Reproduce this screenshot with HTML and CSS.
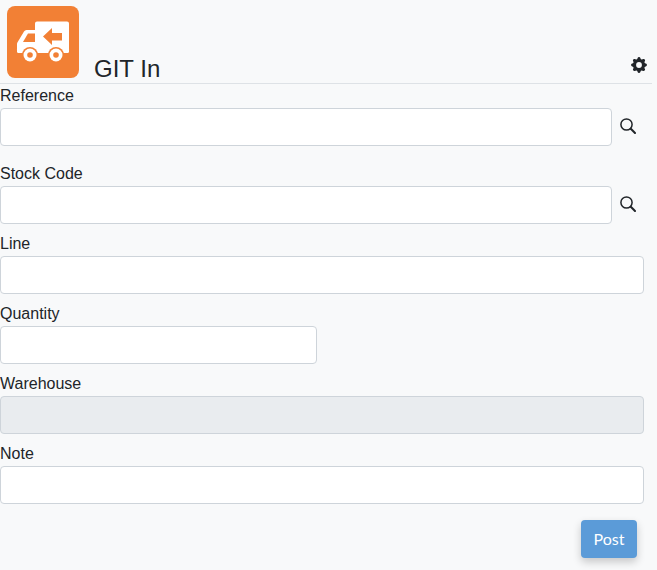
FILE: index.html
```html
<!DOCTYPE html>
<html lang="en">
<head>
<meta charset="utf-8">
<title>GIT In</title>
<link rel="stylesheet" href="styles.css">
</head>
<body>
<header class="header">
  <div class="logo">
    <svg viewBox="0 0 72 72" width="72" height="72" aria-hidden="true">
      <path fill="#fff" d="M28 17.500a2 2 0 0 1 2-2h30a2 2 0 0 1 2 2V44a2 2 0 0 1-2 2H12a2 2 0 0 1-2-1.500V38a4 4 0 0 1 1-2.500L17 25.500a3 3 0 0 1 2.500-1.500H28z"/>
      <rect fill="#fff" x="10" y="42" width="52" height="5" rx="1.500"/>
      <path fill="#f28035" d="M16 36 21 27.500H28V36z"/>
      <circle fill="#f28035" cx="23" cy="49" r="8"/>
      <circle fill="#f28035" cx="49" cy="49" r="8"/>
      <circle fill="#fff" cx="23" cy="49" r="6.500"/>
      <circle fill="#fff" cx="49" cy="49" r="6.500"/>
      <circle fill="#f28035" cx="23" cy="49" r="2.800"/>
      <circle fill="#f28035" cx="49" cy="49" r="2.800"/>
      <path fill="#f28035" d="M36 30.500 45 22V27H55V34.500H45V39z"/>
    </svg>
  </div>
  <h1 class="title">GIT In</h1>
  <svg class="gear" viewBox="0 0 16 16" width="16" height="16" aria-hidden="true">
    <path fill="#212529" d="M9.400 1.100c-.4-1.400-2.400-1.400-2.800 0l-.1.300a1.500 1.500 0 0 1-2.100.9l-.3-.2c-1.300-.7-2.700.7-2 2l.2.300a1.500 1.500 0 0 1-.9 2.100l-.3.100c-1.400.4-1.400 2.400 0 2.800l.3.100a1.500 1.500 0 0 1 .9 2.100l-.2.300c-.7 1.300.7 2.700 2 2l.3-.2a1.500 1.500 0 0 1 2.100.9l.1.300c.4 1.400 2.400 1.400 2.800 0l.1-.3a1.500 1.500 0 0 1 2.100-.9l.3.200c1.300.7 2.700-.7 2-2l-.2-.3a1.500 1.500 0 0 1 .9-2.100l.3-.1c1.400-.4 1.400-2.400 0-2.800l-.3-.1a1.500 1.500 0 0 1-.9-2.100l.2-.3c.7-1.300-.7-2.700-2-2l-.3.2a1.500 1.500 0 0 1-2.100-.9zM8 10.900a2.900 2.900 0 1 1 0-5.800 2.900 2.900 0 0 1 0 5.800z"/>
  </svg>
</header>
<main class="form">
  <div class="group">
    <label class="label" for="reference">Reference</label>
    <div class="row">
      <input class="input" id="reference" type="text">
      <svg class="search" viewBox="0 0 16 16" width="16" height="16" aria-hidden="true"><circle cx="6.500" cy="6.500" r="5.600" fill="none" stroke="#212529" stroke-width="1.500"/><path d="M10.800 10.800 15 15" fill="none" stroke="#212529" stroke-width="2" stroke-linecap="round"/></svg>
    </div>
  </div>
  <div class="group group-wide">
    <label class="label" for="stock">Stock Code</label>
    <div class="row">
      <input class="input" id="stock" type="text">
      <svg class="search" viewBox="0 0 16 16" width="16" height="16" aria-hidden="true"><circle cx="6.500" cy="6.500" r="5.600" fill="none" stroke="#212529" stroke-width="1.500"/><path d="M10.800 10.800 15 15" fill="none" stroke="#212529" stroke-width="2" stroke-linecap="round"/></svg>
    </div>
  </div>
  <div class="group">
    <label class="label" for="line">Line</label>
    <input class="input" id="line" type="text">
  </div>
  <div class="group">
    <label class="label" for="quantity">Quantity</label>
    <input class="input input-half" id="quantity" type="text">
  </div>
  <div class="group">
    <label class="label" for="warehouse">Warehouse</label>
    <input class="input" id="warehouse" type="text" disabled>
  </div>
  <div class="group">
    <label class="label" for="note">Note</label>
    <input class="input" id="note" type="text">
  </div>
  <div class="actions">
    <button class="post" type="button">Post</button>
  </div>
</main>
</body>
</html>
```
FILE: styles.css
```css
* { box-sizing: border-box; }
html, body { height: 100%; }
body {
  margin: 0;
  background: #f8f9fa;
  color: #212529;
  font-family: "Liberation Sans", Arial, sans-serif;
  font-size: 16px;
  line-height: 24px;
  overflow: hidden;
}
.header {
  display: flex;
  align-items: flex-end;
  height: 84px;
  width: 652px;
  padding: 6px 5px 0 7px;
  border-bottom: 1px solid #dee2e6;
}
.logo {
  width: 72px;
  height: 72px;
  flex: none;
  align-self: flex-start;
  background: #f28035;
  border-radius: 8px;
}
.logo svg { display: block; }
.title {
  margin: 0 0 0 15px;
  font-size: 24px;
  font-weight: 400;
  line-height: 29px;
  flex: 1;
}
.gear { margin-bottom: 10px; }
.form { width: 644px; }
.group { margin-top: 8px; }
.group:first-child { margin-top: 0; }
.group-wide { margin-top: 16px; }
.label { display: block; height: 24px; }
.row { display: flex; align-items: center; }
.row .input { width: 612px; flex: none; }
.search { margin: 0 0 2px 8px; }
.input {
  display: block;
  width: 100%;
  height: 38px;
  padding: 6px 12px;
  background: #fff;
  border: 1px solid #ced4da;
  border-radius: 4px;
  font: inherit;
}
.input-half { width: 317px; }
.input:disabled { background: #e9ecef; }
.actions {
  display: flex;
  justify-content: flex-end;
  width: 637px;
  margin-top: 16px;
}
.post {
  width: 56px;
  height: 38px;
  padding: 0 0 2px;
  background: #5b9bd8;
  color: #fff;
  border: 0;
  border-radius: 4px;
  box-shadow: 0 4px 8px rgba(0, 0, 0, .2);
  font-family: Lato, sans-serif;
  font-size: 16px;
}
```
